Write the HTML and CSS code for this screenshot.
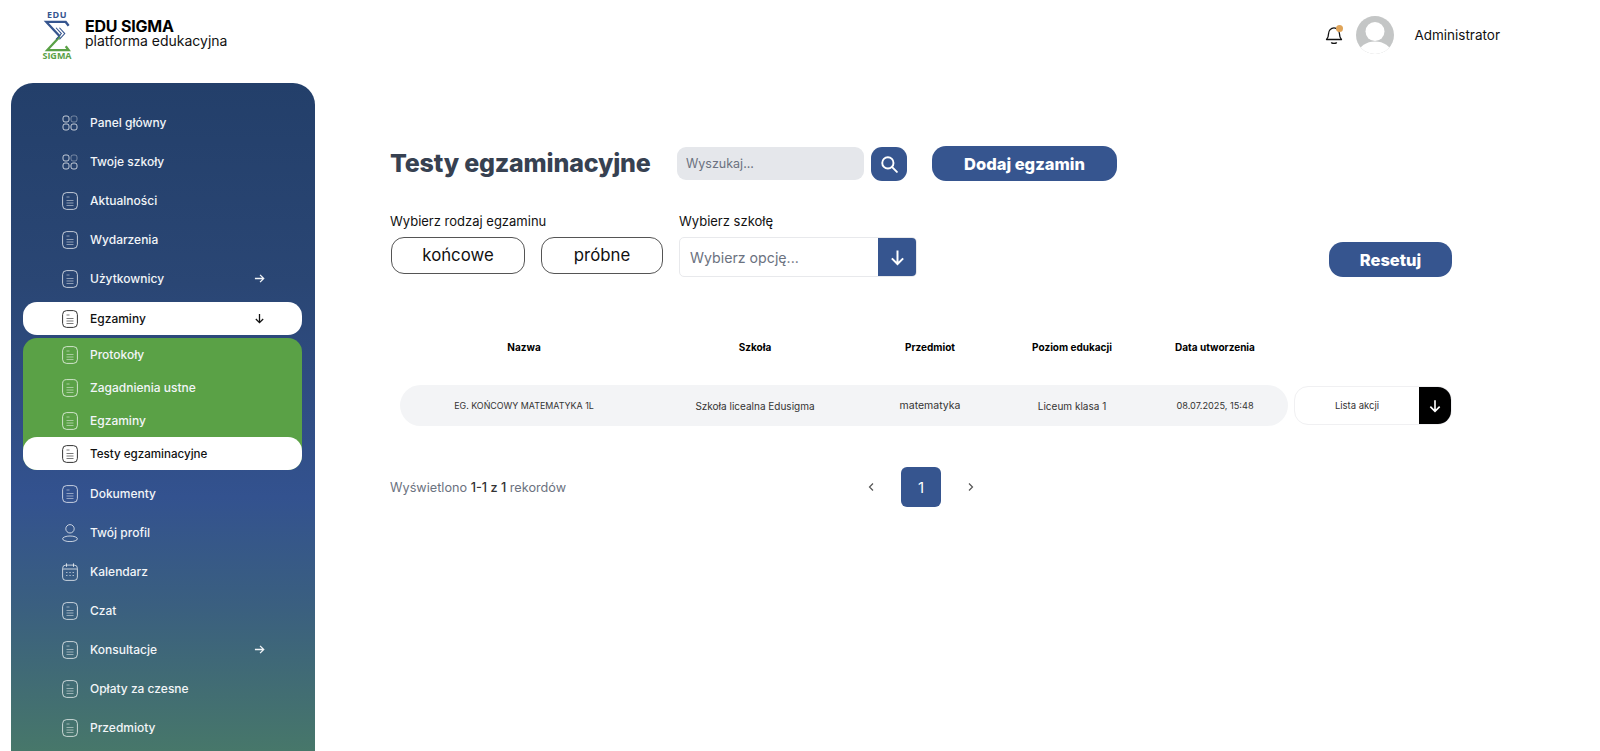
FILE: index.html
```html
<!DOCTYPE html>
<html lang="pl">
<head>
<meta charset="utf-8">
<title>Testy egzaminacyjne</title>
<link rel="stylesheet" href="styles.css">
</head>
<body>
<svg class="defs" width="0" height="0" aria-hidden="true">
  <symbol id="i-doc" viewBox="0 0 16 18"><rect x=".6" y=".6" width="14.8" height="16.8" rx="4" fill="none" stroke="currentColor" stroke-width="1"/><path d="M4.500 5h3M4.500 8.500h7M4.500 11h7M4.500 13.500h7" fill="none" stroke="currentColor" stroke-width="1" opacity=".65"/></symbol>
  <symbol id="i-grid" viewBox="0 0 16 16"><rect x="1" y="1" width="6" height="6" rx="2" fill="none" stroke="currentColor"/><rect x="9" y="1" width="6" height="6" rx="2" fill="none" stroke="currentColor" opacity=".5"/><rect x="1" y="9" width="6" height="6" rx="2" fill="none" stroke="currentColor"/><rect x="9" y="9" width="6" height="6" rx="2" fill="none" stroke="currentColor"/></symbol>
  <symbol id="i-right" viewBox="0 0 12 12"><path d="M1 6h9.6M6.6 2l4 4-4 4" fill="none" stroke="currentColor" stroke-width="1.4"/></symbol>
  <symbol id="i-down" viewBox="0 0 12 12"><path d="M6 1v9.6M2 6.6l4 4 4-4" fill="none" stroke="currentColor" stroke-width="1.4"/></symbol>
</svg>

<header class="topbar">
  <div class="brand">
    <div class="logo">
      <span class="logo-edu">EDU</span>
      <svg class="logo-mark" viewBox="0 0 28 33" role="img" aria-label="Sigma">
        <path d="M26 6 23 2H3l14 15" fill="none" stroke="#36558f" stroke-width="2.400"/>
        <path d="M17 17 4 31h22l-3-4" fill="none" stroke="#5aa146" stroke-width="2.400"/>
        <path d="M13 8l5.500 6-5.500 6M16.500 8l5.500 6-5.500 6" fill="none" stroke="#36558f" stroke-width="1.100"/>
      </svg>
      <span class="logo-sigma">SIGMA</span>
    </div>
    <div class="brand-text">
      <strong>EDU SIGMA</strong>
      <span>platforma edukacyjna</span>
    </div>
  </div>
  <div class="user">
    <span class="bell">
      <svg viewBox="0 0 20 20" width="20" height="20"><path d="M2.500 14.500c1.600-1.500 2-3.200 2-5.400C4.500 5.500 7 2.800 10 2.800s5.500 2.700 5.500 6.300c0 2.200.4 3.900 2 5.400zM7.500 17.800c1.500.6 3.500.6 5 0" fill="none" stroke="#111" stroke-width="1.300" stroke-linejoin="round" stroke-linecap="round"/></svg>
      <i class="bell-dot"></i>
    </span>
    <svg class="avatar" viewBox="0 0 38 38"><defs><clipPath id="av"><circle cx="19" cy="19" r="19"/></clipPath></defs><g clip-path="url(#av)"><rect width="38" height="38" fill="#c4c6c6"/><circle cx="19" cy="15.500" r="9.500" fill="#fff"/><ellipse cx="19" cy="37" rx="16" ry="11.500" fill="#fff"/></g></svg>
    <span class="user-name">Administrator</span>
  </div>
</header>

<div class="layout">
  <nav class="sidebar">
    <a class="nav-item"><svg class="ico ico-grid"><use href="#i-grid"/></svg>Panel główny</a>
    <a class="nav-item"><svg class="ico ico-grid"><use href="#i-grid"/></svg>Twoje szkoły</a>
    <a class="nav-item"><svg class="ico"><use href="#i-doc"/></svg>Aktualności</a>
    <a class="nav-item"><svg class="ico"><use href="#i-doc"/></svg>Wydarzenia</a>
    <a class="nav-item"><svg class="ico"><use href="#i-doc"/></svg>Użytkownicy<svg class="arrow"><use href="#i-right"/></svg></a>
    <a class="pill pill-open"><svg class="ico"><use href="#i-doc"/></svg>Egzaminy<svg class="arrow"><use href="#i-down"/></svg></a>
    <div class="subnav">
      <a class="sub-item"><svg class="ico"><use href="#i-doc"/></svg>Protokoły</a>
      <a class="sub-item"><svg class="ico"><use href="#i-doc"/></svg>Zagadnienia ustne</a>
      <a class="sub-item"><svg class="ico"><use href="#i-doc"/></svg>Egzaminy</a>
      <a class="pill pill-sub"><svg class="ico"><use href="#i-doc"/></svg>Testy egzaminacyjne</a>
    </div>
    <a class="nav-item after-sub"><svg class="ico"><use href="#i-doc"/></svg>Dokumenty</a>
    <a class="nav-item"><svg class="ico" viewBox="0 0 16 18"><circle cx="8" cy="4.800" r="4.200" fill="none" stroke="currentColor"/><ellipse cx="8" cy="14.800" rx="7.400" ry="2.800" fill="none" stroke="currentColor"/></svg>Twój profil</a>
    <a class="nav-item"><svg class="ico" viewBox="0 0 16 18"><rect x=".6" y="2.100" width="14.800" height="15.300" rx="3.200" fill="none" stroke="currentColor"/><path d="M4.500.3v3.600M11.500.3v3.600M1 6h14" fill="none" stroke="currentColor"/><path d="M4 9.500h1.500M7.300 9.500h1.500M10.500 9.500H12M4 12.500h1.500M7.300 12.500h1.500M10.500 12.500H12" fill="none" stroke="currentColor" stroke-width="1.200" opacity=".8"/></svg>Kalendarz</a>
    <a class="nav-item"><svg class="ico"><use href="#i-doc"/></svg>Czat</a>
    <a class="nav-item"><svg class="ico"><use href="#i-doc"/></svg>Konsultacje<svg class="arrow"><use href="#i-right"/></svg></a>
    <a class="nav-item"><svg class="ico"><use href="#i-doc"/></svg>Opłaty za czesne</a>
    <a class="nav-item"><svg class="ico"><use href="#i-doc"/></svg>Przedmioty</a>
  </nav>

  <main class="main">
    <div class="title-row">
      <h1 class="title">Testy egzaminacyjne</h1>
      <div class="search-input">Wyszukaj...</div>
      <button class="search-btn" aria-label="Szukaj">
        <svg viewBox="0 0 16 16" width="18" height="18"><circle cx="7" cy="7" r="5" fill="none" stroke="#fff" stroke-width="1.700"/><path d="M10.800 10.800 15 15" stroke="#fff" stroke-width="1.700" stroke-linecap="round"/></svg>
      </button>
      <button class="btn btn-add">Dodaj egzamin</button>
    </div>

    <div class="filters">
      <div class="filter filter-type">
        <div class="filter-label">Wybierz rodzaj egzaminu</div>
        <div class="type-buttons">
          <button class="type-btn type-final">końcowe</button>
          <button class="type-btn type-trial">próbne</button>
        </div>
      </div>
      <div class="filter">
        <div class="filter-label">Wybierz szkołę</div>
        <div class="select">
          <span class="select-text">Wybierz opcję...</span>
          <span class="select-arrow"><svg viewBox="0 0 12 12" width="17" height="17"><use href="#i-down"/></svg></span>
        </div>
      </div>
      <button class="btn btn-reset">Resetuj</button>
    </div>

    <div class="table-head cols">
      <div>Nazwa</div><div>Szkoła</div><div>Przedmiot</div><div>Poziom edukacji</div><div>Data utworzenia</div>
    </div>
    <div class="table-row">
      <div class="row-cells cols">
        <div class="cell-caps">EG. KOŃCOWY MATEMATYKA 1L</div><div>Szkoła licealna Edusigma</div><div class="cell-wide">matematyka</div><div>Liceum klasa 1</div><div class="cell-date">08.07.2025, 15:48</div>
      </div>
      <div class="actions">
        <span class="actions-label">Lista akcji</span>
        <span class="actions-arrow"><svg viewBox="0 0 12 12" width="14" height="14"><use href="#i-down"/></svg></span>
      </div>
    </div>

    <div class="pagination">
      <div class="records">Wyświetlono <b>1-1 z 1</b> rekordów</div>
      <span class="page-arrow">
        <svg viewBox="0 0 8 10" width="8" height="10"><path d="M6 1.500 2.500 5 6 8.500" fill="none" stroke="#555" stroke-width="1.200"/></svg>
      </span>
      <span class="page-current">1</span>
      <span class="page-arrow">
        <svg viewBox="0 0 8 10" width="8" height="10"><path d="M2 1.500 5.500 5 2 8.500" fill="none" stroke="#555" stroke-width="1.200"/></svg>
      </span>
    </div>
  </main>
</div>
</body>
</html>
```
FILE: styles.css
```css
* { box-sizing: border-box; }
html, body { margin: 0; height: 751px; overflow: hidden; background: #fff; }
body { font-family: Inter, "Liberation Sans", sans-serif; color: #111; }
button { font-family: inherit; cursor: pointer; }
.defs { position: absolute; }

.topbar { height: 83px; display: flex; justify-content: space-between; padding: 10px 100px 0 42px; }
.brand { display: flex; gap: 13px; align-items: flex-start; }
.logo { width: 30px; flex: none; display: flex; flex-direction: column; align-items: center; font-family: "Open Sans", sans-serif; font-weight: 700; font-size: 9px; line-height: 9px; }
.logo-edu { color: #36558f; letter-spacing: .5px; }
.logo-mark { width: 28px; height: 32px; margin: 1px 0 -1px; }
.logo-sigma { color: #5aa146; }
.brand-text { display: flex; flex-direction: column; padding-top: 8px; }
.brand-text strong { font-size: 16px; line-height: 16px; font-weight: 700; color: #000; letter-spacing: -.2px; }
.brand-text span { font-size: 14px; line-height: 13px; color: #111; }

.user { display: flex; align-items: center; height: 38px; margin-top: 6px; }
.bell { position: relative; width: 20px; height: 20px; margin-right: 12px; }
.bell-dot { position: absolute; top: 0; right: 1px; width: 7px; height: 7px; border-radius: 50%; background: #e0a458; }
.avatar { width: 38px; height: 38px; flex: none; }
.user-name { margin-left: 20px; font-size: 13.5px; color: #111; }

.layout { display: flex; height: 668px; }
.sidebar { width: 304px; margin-left: 11px; flex: none; padding: 20px 13px 0 12px; border-radius: 22px 22px 0 0; color: #f2f5f8;
  background: linear-gradient(180deg, #233f6a 0%, #2a4674 30%, #33528f 62%, #3a5f80 78%, #47776a 100%); }
.nav-item, .sub-item, .pill { display: flex; align-items: center; padding-left: 39px; font-size: 12px; font-weight: 500; position: relative; }
.nav-item { height: 39px; }
.after-sub { margin-top: 4px; }
.sub-item { height: 33px; }
.pill { height: 33px; background: #fff; color: #111; border-radius: 14px; }
.pill-open { margin-top: 4px; }
.pill-sub { font-size: 11.6px; }
.subnav { margin-top: 3px; background: #5aa146; border-radius: 14px; }
.ico { width: 16px; height: 18px; margin-right: 12px; color: rgba(255,255,255,.72); flex: none; }
.ico-grid { height: 16px; }
.pill .ico { color: #333; }
.arrow { position: absolute; left: 231px; width: 11px; height: 11px; }

.main { width: 1062px; margin-left: 75px; padding-top: 63px; flex: none; }
.title-row { display: flex; align-items: center; height: 35px; }
.title { width: 287px; margin: 0 0 2px; font-size: 25px; font-weight: 800; color: #374151; white-space: nowrap; letter-spacing: -.2px; }
.search-input { width: 187px; height: 33px; padding-left: 9px; display: flex; align-items: center; background: #e5e7eb; border-radius: 9px; font-size: 12.5px; color: #6b7280; }
.search-btn { width: 36px; height: 34px; margin-left: 7px; display: flex; align-items: center; justify-content: center; padding: 0; border: 0; border-radius: 11px; background: #36558f; }
.btn { border: 0; color: #fff; background: #36558f; border-radius: 14px; font-weight: 800; font-size: 16.5px; height: 35px; }
.btn-add { width: 185px; margin-left: 25px; }
.btn-reset { width: 123px; margin-left: auto; align-self: flex-end; }

.filters { display: flex; margin-top: 32px; height: 64px; }
.filter-type { width: 289px; }
.filter-label { font-size: 13px; line-height: 16px; color: #111; margin-bottom: 8px; }
.type-buttons { display: flex; gap: 16px; margin-left: 1px; }
.type-btn { height: 37px; border: 1px solid #555; background: #fff; border-radius: 13px; font-size: 16.8px; color: #111; padding: 0 0 2px; }
.type-final { width: 134px; }
.type-trial { width: 122px; }
.select { width: 238px; height: 40px; display: flex; border: 1px solid #e8e9ec; border-radius: 5px; overflow: hidden; }
.select-text { flex: 1; padding-left: 10px; align-self: center; font-size: 14.2px; color: #6b7280; }
.select-arrow { width: 38px; display: flex; align-items: center; justify-content: center; background: #36558f; color: #fff; }

.cols { display: grid; grid-template-columns: 248px 214px 136px 148px 142px; text-align: center; }
.cols > :last-child { padding-right: 4px; }
.table-head { margin: 60px 0 0 10px; height: 20px; align-items: center; font-size: 10px; font-weight: 700; color: #000; }
.table-row { display: flex; align-items: center; gap: 6px; margin: 28px 0 0 10px; }
.row-cells { height: 41px; align-items: center; background: #f3f4f6; border-radius: 21px; font-size: 10px; color: #333; }
.cell-caps { font-size: 8.900px; }
.cell-date { font-size: 9.200px; }
.cell-wide { font-size: 10.500px; }
.actions { width: 158px; height: 39px; display: flex; border: 1px solid #f0f0f2; border-radius: 14px; overflow: hidden; }
.actions-label { flex: 1; align-self: center; text-align: center; font-size: 9.5px; color: #333; }
.actions-arrow { width: 32px; display: flex; align-items: center; justify-content: center; background: #000; color: #fff; }

.pagination { display: flex; align-items: center; margin-top: 41px; height: 40px; }
.records { width: 471px; font-size: 12.7px; color: #6b7280; }
.records b { font-weight: 500; color: #333; }
.page-arrow { width: 20px; display: flex; justify-content: center; }
.page-current { width: 40px; height: 40px; margin: 0 20px; display: flex; align-items: center; justify-content: center; background: #36558f; border-radius: 6px; color: #fff; font-size: 15px; }
```
